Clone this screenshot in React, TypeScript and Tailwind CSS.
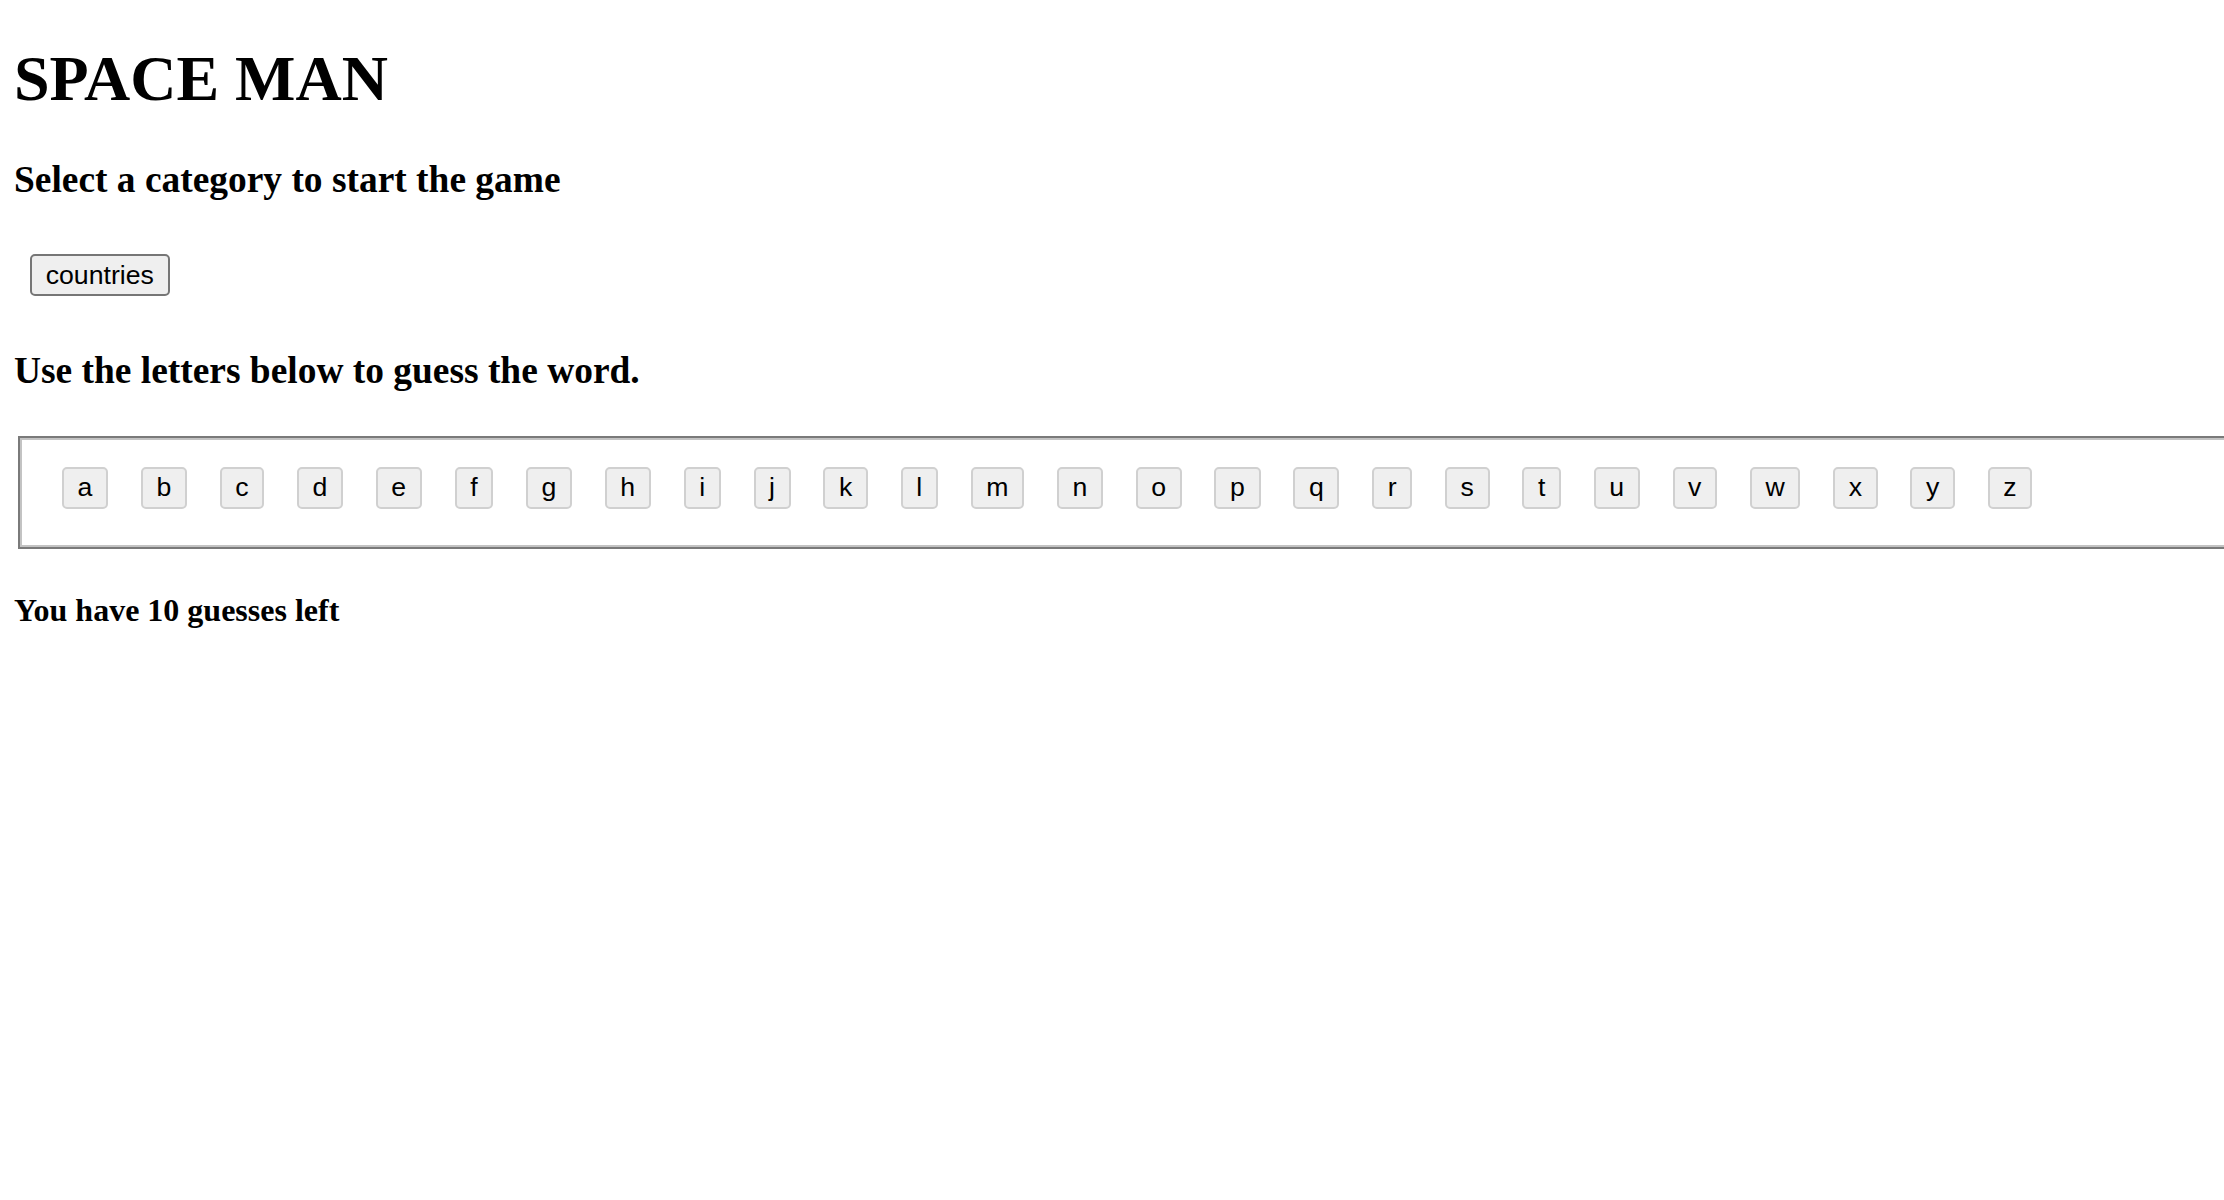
import React from "react";

const letters = "abcdefghijklmnopqrstuvwxyz".split("");

export default function App() {
  return (
    <div className="min-h-screen w-full overflow-hidden bg-white pl-[14px] font-['Liberation_Serif','Times_New_Roman',serif] text-black">
      <h1 className="mt-[42px] text-[64px] leading-[74px] font-bold">SPACE MAN</h1>
      <h3 className="mt-[42px] text-[37.44px] leading-[43px] font-bold">
        Select a category to start the game
      </h3>
      <div className="mt-[37px] flex py-[16px] pl-[16px]">
        <button className="flex h-[42px] items-center rounded-[5px] border-2 border-[#767676] bg-[#efefef] px-[13.7px] font-['Liberation_Sans',Arial,sans-serif] text-[26.67px] leading-none text-black">
          countries
        </button>
      </div>
      <h3 className="mt-[37px] text-[37.44px] leading-[43px] font-bold">
        Use the letters below to guess the word.
      </h3>
      <div className="mt-[44px] ml-[4px] w-[2300px] shrink-0 border-2 border-[#7a7a7a]">
        <div className="flex gap-[32.8px] border-2 border-[#c3c3c3] pt-[27px] pb-[36px] pl-[40px]">
          {letters.map((l) => (
            <button
              key={l}
              className="flex h-[42px] shrink-0 items-center rounded-[5px] border-2 border-[#d0d0d0] bg-[#efefef] px-[13.6px] pb-[1px] font-['Liberation_Sans',Arial,sans-serif] text-[26.67px] leading-none text-black"
            >
              {l}
            </button>
          ))}
        </div>
      </div>
      <h4 className="mt-[43px] text-[32px] leading-[37px] font-bold">You have 10 guesses left</h4>
    </div>
  );
}
